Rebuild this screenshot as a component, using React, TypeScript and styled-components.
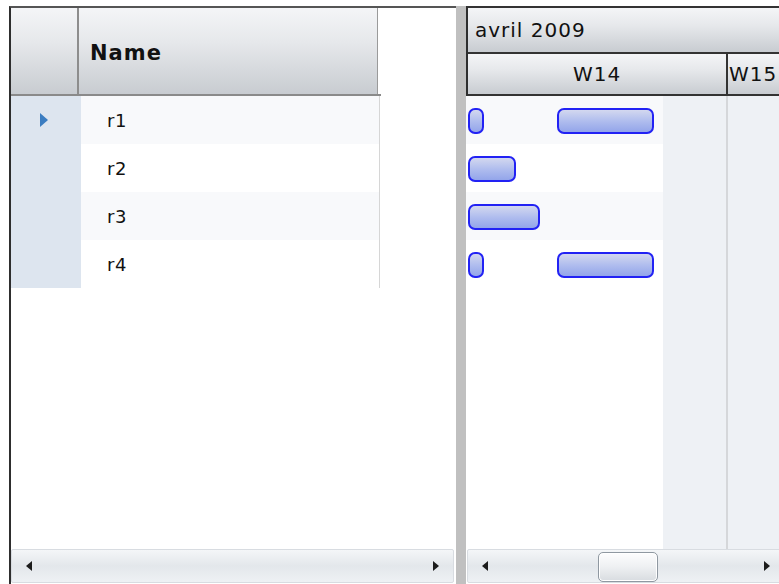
import React from "react";
import styled, { createGlobalStyle } from "styled-components";

const GlobalStyle = createGlobalStyle`
  html, body {
    margin: 0;
    padding: 0;
    background: #fff;
  }
  body {
    font-family: "DejaVu Sans", Verdana, sans-serif;
    color: #111;
  }
`;

type Task = { left: number; width: number };
type Resource = { name: string; tasks: Task[] };

const resources: Resource[] = [
  { name: "r1", tasks: [{ left: 2, width: 16 }, { left: 91, width: 97 }] },
  { name: "r2", tasks: [{ left: 2, width: 48 }] },
  { name: "r3", tasks: [{ left: 2, width: 72 }] },
  { name: "r4", tasks: [{ left: 2, width: 16 }, { left: 91, width: 97 }] },
];

const headerGradient = "linear-gradient(#f4f5f7 0%, #e6e8eb 40%, #c8ccd1 100%)";

const Frame = styled.div`
  width: 779px;
  height: 584px;
  box-sizing: border-box;
  padding: 6px 0 0 9px;
  display: grid;
  grid-template-columns: 447px 10px 1fr;
  overflow: hidden;
`;

/* ---------- left grid ---------- */

const LeftPanel = styled.div`
  display: flex;
  flex-direction: column;
  border-left: 2px solid #2e2e2e;
  border-top: 2px solid #555;
  min-height: 0;
`;

const LeftHeader = styled.div`
  display: grid;
  grid-template-columns: 68px 299px;
  width: 370px;
  height: 86px;
  border-bottom: 2px solid #8a8a8a;
`;

const CornerCell = styled.div`
  background: ${headerGradient};
  border-right: 2px solid #8d8d8d;
`;

const ColumnHead = styled.div`
  background: ${headerGradient};
  border-right: 1px solid #9a9a9a;
  display: flex;
  align-items: center;
  padding: 3px 0 0 11px;
  font-weight: bold;
  font-size: 21px;
  letter-spacing: 1px;
`;

const LeftBody = styled.div`
  flex: 1;
  display: flex;
  flex-direction: column;
`;

const GridRow = styled.div`
  display: grid;
  grid-template-columns: 70px 299px;
  width: 370px;
  height: 48px;
`;

const RowHead = styled.div`
  background: #dde5ef;
  display: flex;
  align-items: center;
  justify-content: center;
`;

const CurrentMark = styled.span`
  width: 0;
  height: 0;
  border-top: 7px solid transparent;
  border-bottom: 7px solid transparent;
  border-left: 8px solid #3b7dc1;
  margin-left: -4px;
`;

const NameCell = styled.div<{ $odd: boolean }>`
  background: ${(p) => (p.$odd ? "#f8f9fb" : "#fff")};
  border-right: 1px solid #d6d6d6;
  display: flex;
  align-items: center;
  padding-left: 26px;
  font-size: 18px;
  letter-spacing: 0.5px;
`;

/* ---------- scrollbars ---------- */

const ScrollBar = styled.div`
  height: 34px;
  box-sizing: border-box;
  border: 1px solid #d8dce1;
  border-radius: 2px;
  background: linear-gradient(#f4f6f8 0%, #e3e7eb 50%, #eef1f4 100%);
  display: flex;
  align-items: center;
  padding: 0 14px;
  margin-bottom: 1px;
`;

const LeftScroll = styled(ScrollBar)`
  margin-right: 2px;
`;

const RightScroll = styled(ScrollBar)`
  margin-left: 1px;
  margin-right: -6px;
`;

const Arrow = styled.span<{ $dir: "left" | "right" }>`
  width: 0;
  height: 0;
  border-top: 5px solid transparent;
  border-bottom: 5px solid transparent;
  ${(p) =>
    p.$dir === "left"
      ? "border-right: 6px solid #1c1c1c;"
      : "border-left: 6px solid #1c1c1c;"}
`;

const Track = styled.div`
  flex: 1;
  align-self: stretch;
  display: flex;
  padding-top: 2px;
`;

const Thumb = styled.div`
  width: 60px;
  box-sizing: border-box;
  border: 1px solid #8f98a1;
  border-radius: 5px;
  background: linear-gradient(#fdfdfe 0%, #eef0f2 50%, #d8dce0 100%);
  box-shadow: inset 0 0 0 1px #fff;
`;

/* ---------- splitter ---------- */

const Splitter = styled.div`
  background: #c0c0c0;
`;

/* ---------- gantt ---------- */

const RightPanel = styled.div`
  display: flex;
  flex-direction: column;
  min-width: 0;
  overflow: hidden;
`;

const TimeHeader = styled.div`
  border-left: 2px solid #2e2e2e;
  border-top: 2px solid #333;
  display: flex;
  flex-direction: column;
`;

const MonthRow = styled.div`
  height: 44px;
  border-bottom: 2px solid #333;
  background: ${headerGradient};
  display: flex;
  align-items: center;
  padding-left: 7px;
  font-size: 20px;
  letter-spacing: 1px;
  white-space: nowrap;
`;

const WeekRow = styled.div`
  height: 40px;
  border-bottom: 2px solid #333;
  display: flex;
`;

const WeekCell = styled.div<{ $width?: number }>`
  ${(p) => (p.$width ? `width: ${p.$width}px; border-right: 2px solid #333;` : "flex: 1;")}
  background: ${headerGradient};
  display: flex;
  align-items: center;
  justify-content: ${(p) => (p.$width ? "center" : "flex-start")};
  font-size: 20px;
  letter-spacing: 1px;
  white-space: nowrap;
  overflow: hidden;
  padding-left: ${(p) => (p.$width ? "0" : "1px")};
`;

const Chart = styled.div`
  flex: 1;
  display: grid;
  & > * {
    grid-area: 1 / 1;
  }
`;

const DayColumns = styled.div`
  display: flex;
`;

const DayBlock = styled.div<{ $width?: number; $off?: boolean }>`
  ${(p) => (p.$width ? `width: ${p.$width}px;` : "flex: 1;")}
  background: ${(p) => (p.$off ? "#eef1f5" : "#fff")};
`;

const WeekLine = styled.div`
  width: 2px;
  background: #d5d7da;
`;

const Lanes = styled.div`
  display: flex;
  flex-direction: column;
  align-self: start;
`;

const Lane = styled.div<{ $odd: boolean }>`
  position: relative;
  height: 48px;
  background: ${(p) =>
    p.$odd ? "linear-gradient(#f8f9fb, #f8f9fb) no-repeat 0 0 / 197px 100%" : "none"};
`;

const Bar = styled.div`
  position: absolute;
  top: 12px;
  height: 26px;
  box-sizing: border-box;
  border: 2px solid #2222f4;
  border-radius: 7px;
  background: linear-gradient(#d3d8ef 0%, #b0bdee 50%, #93a5ea 100%);
`;

const App: React.FC = () => {
  return (
    <>
      <GlobalStyle />
      <Frame>
        <LeftPanel>
          <LeftHeader>
            <CornerCell />
            <ColumnHead>Name</ColumnHead>
          </LeftHeader>
          <LeftBody>
            {resources.map((r, i) => (
              <GridRow key={r.name}>
                <RowHead>{i === 0 && <CurrentMark />}</RowHead>
                <NameCell $odd={i % 2 === 0}>{r.name}</NameCell>
              </GridRow>
            ))}
          </LeftBody>
          <LeftScroll>
            <Arrow $dir="left" />
            <Track />
            <Arrow $dir="right" />
          </LeftScroll>
        </LeftPanel>

        <Splitter />

        <RightPanel>
          <TimeHeader>
            <MonthRow>avril 2009</MonthRow>
            <WeekRow>
              <WeekCell $width={258}>W14</WeekCell>
              <WeekCell>W15</WeekCell>
            </WeekRow>
          </TimeHeader>
          <Chart>
            <DayColumns>
              <DayBlock $width={197} />
              <DayBlock $width={63} $off />
              <WeekLine />
              <DayBlock $off />
            </DayColumns>
            <Lanes>
              {resources.map((r, i) => (
                <Lane key={r.name} $odd={i % 2 === 0}>
                  {r.tasks.map((t, j) => (
                    <Bar key={j} style={{ left: t.left, width: t.width }} />
                  ))}
                </Lane>
              ))}
            </Lanes>
          </Chart>
          <RightScroll>
            <Arrow $dir="left" />
            <Track>
              <Thumb style={{ marginLeft: 110 }} />
            </Track>
            <Arrow $dir="right" />
          </RightScroll>
        </RightPanel>
      </Frame>
    </>
  );
};

export default App;
